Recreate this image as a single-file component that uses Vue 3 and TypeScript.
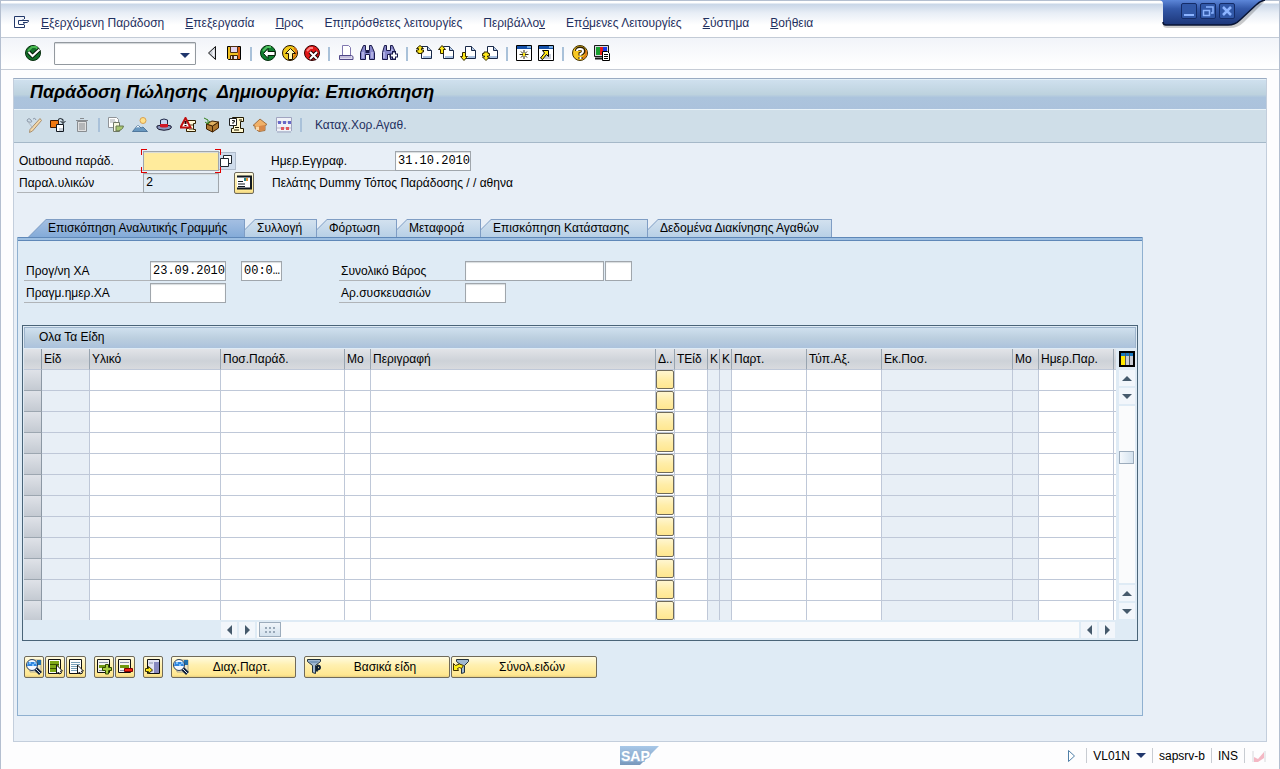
<script setup lang="ts">
import { h, ref } from 'vue'

type Shape = [d: string, fill: string, stroke?: string, width?: number]

const disc = 'M8 .5a7.500 7.500 0 1 0 0 15a7.500 7.500 0 1 0 0-15z'
const page = 'M5.500 1.500h6l4 4v8h-10z'
const fold = 'M11.500 1.500v4h4'
const up = 'M4 .5l3.500 4h-2v4h-3v-4h-2z'
const down = 'M4 15.500l3.500-4h-2v-4h-3v4h-2z'

const icons: Record<string, Shape[]> = {
  session: [
    ['M10.500 4V1.500H.5v11h10V10', 'none', '#22386a'],
    ['M4.500 9.500v-4H8l1.500-1M8 5.500h6.500v1L13 7.500H9M5 9.500h5v-2', 'none', '#22386a'],
  ],
  enter: [[disc, '#14702a', '#052d0c'], ['M3 6l4-4h4l2 3', 'none', '#48b850', 2], ['M3.500 7l4 4L14.500 4.500', 'none', '#061a08', 4], ['M3.500 7l4 4L14.500 4.500', 'none', '#fff', 2]],
  left: [['M11.500 1.500v13L4.500 8z', '#c8ccd4', '#111'], ['M9.500 5v6', 'none', '#f4f4f8', 2]],
  save: [
    ['M1.500 1.500h13v13h-12l-1-1z', '#f0c020', '#000'],
    ['M12 2h2v12H5v-2h7z', '#e06010'],
    ['M4.500 1.500h7v6h-7z', '#e4d4f0', '#503010'],
    ['M4.500 10.500h7v4h-7z', '#e8e0e8', '#402000'],
    ['M6 11h2v3H6z', '#503020'],
  ],
  back: [[disc, '#108030', '#032c0c'], ['M3 6l4-4h4', 'none', '#50c060', 2], ['M3.500 8.500l4.500-5v3h7v4H8v3z', '#fff', '#062008']],
  exit: [[disc, '#f0c818', '#201000'], ['M11 13l3-4V5l-2-2', 'none', '#e07810', 2], ['M8.500 3.500l5 5h-3v6h-4v-6h-3z', '#fff8b8', '#201000']],
  cancel: [[disc, '#e01818', '#300000'], ['M3 6l3-3h3', 'none', '#ff8080', 2], ['M6 7l7 7M13 7l-7 7', 'none', '#200000', 4], ['M6 7l7 7M13 7l-7 7', 'none', '#fff', 2]],
  print: [
    ['M4.500 .5h6l2 2v9h-8z', '#fff', '#8078b0'],
    ['M1.500 10.500h12l1.500 1v3h-13.500z', '#e0dcf0', '#504888'],
    ['M2 12h11', 'none', '#a8a0c8'],
  ],
  find: [
    ['M3.500 .5h2v5h4v-5h2l3 7v7h-5v-5h-4v5h-5v-7z', '#8888cc', '#181848'],
    ['M3 7v6M12 7v6', 'none', '#d8d8f8'],
    ['M5.500 7h4', 'none', '#181848', 2],
  ],
  findNext: [
    ['M2.500 .5h2v5h4v-5h2l3 7v7h-5v-5h-3v5h-5v-7z', '#8888cc', '#181848'],
    ['M2 7v6M10 4v3', 'none', '#d8d8f8'],
    ['M12 6v9M7.500 10.500h9', 'none', '#181848', 4],
    ['M12 7.500v6M9 10.500h6', 'none', '#fff', 2],
  ],
  first: [[page, '#fff', '#182848'], [fold, '#b8cce8', '#182848'], ['M4 .5l3.500 3h-2v1.500h2v2h-1.500v1.500h-4V7H.5V5h2V3.500h-2z', '#ffe818', '#302800'], ['M7 12h8', 'none', '#a8c0e0', 2]],
  prev: [[page, '#fff', '#182848'], [fold, '#b8cce8', '#182848'], [up, '#ffe818', '#302800'], ['M7 12h8', 'none', '#a8c0e0', 2]],
  next: [[page, '#fff', '#182848'], [fold, '#b8cce8', '#182848'], ['M8 12h7', 'none', '#a8c0e0', 2], [down, '#ffe818', '#302800']],
  last: [[page, '#fff', '#182848'], [fold, '#b8cce8', '#182848'], ['M8 12h7', 'none', '#a8c0e0', 2], ['M4 15.500L.5 12h2v-1h-2V8.500h1.500V7h4v1.500h1.500V11h-2v1h2z', '#ffe818', '#302800']],
  newSession: [
    ['M.5.5h15v15H.5z', '#fff', '#000'], ['M1 1h14v3H1z', '#1450a8'], ['M11 1h4v2h-4z', '#78b0e8'],
    ['M8 5v9M3.500 9.500h9M5 6.500l6 6M11 6.500l-6 6', 'none', '#302800'], ['M7 8h2v3H7z', '#ffe818'],
  ],
  shortcut: [
    ['M.5.5h15v15H.5z', '#fff', '#000'], ['M1 1h14v3H1z', '#1450a8'], ['M11 1h4v2h-4z', '#78b0e8'],
    ['M8 9h5v5H6z', '#c8ccd8'],
    ['M4.500 5.500h6v6l-2-2l-4 5l-2-1.500l4-5z', '#ffe818', '#000'],
  ],
  help: [[disc, '#f8c820', '#403000'], ['M10 14l4-4V5', 'none', '#e08018', 2], ['M5 6q0-2.500 3-2.500q3.500 0 3.500 2.500q0 2-3 3v1.500M8.500 12v2', 'none', '#302000', 4], ['M5 6q0-2 3-2q3 0 3 2q0 2-2.500 3v1.500M8.500 12v2', 'none', '#fff', 2]],
  layout: [
    ['M.5.5h14v11H.5z', '#d8d8e0', '#181818'], ['M2 2h4v8H2z', '#18a030'], ['M6 2h3v8H6z', '#e81818'], ['M9 2h4v8H9z', '#1838e8'],
    ['M1 13.500h9', 'none', '#181818', 2], ['M8.500 6.500h5l2 2v7h-7z', '#fff', '#000'], ['M10 9.500h4M10 11.500h4M10 13.500h4', 'none', '#000'],
  ],
  change: [
    ['M1 3q2-3 4 0t-2 2q-2 0-2-2M7 2q2-2 3 1', 'none', '#8c98a8'],
    ['M14 1.500l1.500 2L6.500 14l-3 1.500l.5-3z', '#f4d8a8', '#a89070'],
    ['M2 5l5 6', 'none', '#b0b8c0'],
  ],
  other: [
    ['M.5 3.500h8v7h-8z', '#f07810', '#401800'], ['M6.500 7.500h7v7h-7z', '#fff', '#101820'], ['M9 11h4v3H9z', '#c8d0d8'],
    ['M8 2.500q2-2 5 0v4M10.500 4l2.500 2.500L15.500 4', 'none', '#101820'],
  ],
  trash: [
    ['M3.500 4.500h9v10h-9z', '#e0e0e0', '#888c90'], ['M2 3.500h12M6 1.500h4', 'none', '#888c90'], ['M6 6v7M8 6v7M10 6v7', 'none', '#888c90'],
  ],
  copyDoc: [
    ['M.5.5h8l2 2v8H.5z', '#fff', '#909498'], ['M2 3h5M2 5h6', 'none', '#a8acb0'],
    ['M5.500 5.500h6v9h-6z', '#f8f8e0', '#707868'], ['M8 9h7.500q-1 5-7.500 5z', '#a8c870', '#687850'],
  ],
  header: [
    ['M11 .5a3 3 0 1 0 0 6a3 3 0 1 0 0-6z', '#ffe088', '#d8a050'],
    ['M.5 14.500L6 8l3 3l2-1l4.500 4.500z', '#6898c0', '#50789c'], ['M6 8l-2 3l2-1l2 1z', '#fff'],
  ],
  hat: [
    ['M1 9q7-3 14 0q1.500 2-2 3.500q-5 1.500-10 0Q0 11 1 9z', '#8c98c0', '#181830'],
    ['M4.500 9V3q3.500-2 7 0v6z', '#c8d4f0', '#202848'], ['M4 7h8v3q-4 1-8 0z', '#d01828'],
  ],
  incomplete: [
    ['M7.500 3.500h8v3h-2v6h2v2h-9v-3h2z', '#fff8d8', '#302000'], ['M10 8h3M9 12h4', 'none', '#504020'],
    ['M5.500 1l5 9.500h-10z', '#fff', '#c01010', 2], ['M5.500 4v3M5.500 8v1', 'none', '#300000', 2],
  ],
  pack: [
    ['M2.500 7l6 2 6-4v6l-6 4-6-3z', '#b07830', '#402000'], ['M2.500 7L8 4l6.500 1l-6 4z', '#e0b060', '#402000'],
    ['M8.500 9v6', 'none', '#402000'], ['M0 1l4 2v3M1 5l3 2l2-3', 'none', '#308018', 1],
  ],
  scroll: [
    ['M4.500.5h11v4h-3v7h3v4h-12v-4h2v-4h-1z', '#fff8d0', '#201800'],
    ['M1.500 1.500h7v7h-7z', '#fff', '#202020'], ['M4 3.500h2.500v1.500H5v2', 'none', '#202020'], ['M7 10.500h4M6 13h5M11 3h3', 'none', '#201800'],
  ],
  post: [
    ['M1 8.500l7-6.500 7 5.500-2 1v5l-6 1-4-3V9z', '#f0b068', '#a07040'],
    ['M7 14V9l6-1v5z', '#d88848'], ['M4 10h3v3H4z', '#f8d8a8'],
  ],
  abacus: [
    ['M.5 14V.5h15V14', '#f0f2f8', '#a0a4c0'], ['M1 5h14M1 11h14', 'none', '#b8b8c8'],
    ['M2 4h3v3H2zM7 4h3v3H7zM12 4h3v3h-3z', '#6868c8'], ['M5 10h3v3H5zM10 10h3v3h-3z', '#e05860'], ['M1 15h14', 'none', '#a0a4c0'],
  ],
  lens: [
    ['M4 1h11v12H4z', '#efe6c8', '#b0a888'],
    ['M11 1h4v5h-4z', '#1f6fae'],
    ['M9.500 9.500l5 5', 'none', '#10203a', 4],
    ['M10 10l4.500 4.500', 'none', '#dfe8f0', 1],
    ['M6 .5a5.500 5.500 0 1 0 0 11a5.500 5.500 0 1 0 0-11z', '#f4f8ff', '#283c58'],
    ['M2 3h8l1 4H1z', '#2f86e0'],
    ['M3 3h2v2H3zM6 5h2v2H6zM8 3h2v2H8z', '#7cc0f8'],
  ],
  selectAll: [
    ['M1.500 .5h12v14h-12z', '#fff', '#101010'], ['M3 2h9v3H3zM3 6h9v3H3zM3 10h9v3H3z', '#7fa818'],
    ['M3 5.500h9M3 9.500h9', 'none', '#385000'], ['M9.500 6v9l2-2l1 2l2-1l-1-2h2z', '#fff', '#181818'],
  ],
  deselectAll: [
    ['M1.500 .5h12v14h-12z', '#fff', '#101010'], ['M3 3.500h9M3 5.500h9M3 7.500h8M3 9.500h6M3 11.500h6', 'none', '#78a0b8'],
    ['M9.500 6v9l2-2l1 2l2-1l-1-2h2z', '#fff', '#181818'],
  ],
  addRow: [
    ['M1.500 .5h12v13h-12z', '#f4f4f0', '#101010'], ['M3 3.500h9M3 11.500h6', 'none', '#8890a8'], ['M3 6h7v3H3z', '#6f9810'],
    ['M9.500 5.500h3v3h3v3h-3v3.500h-3v-3.500h-3v-3h3z', '#a8cc40', '#304800'],
  ],
  removeRow: [
    ['M1.500 .5h12v13h-12z', '#f4f4f0', '#101010'], ['M3 3.500h9M3 11.500h5', 'none', '#8890a8'], ['M3 6h9v3H3z', '#6f9810'],
    ['M7.500 9.500h8v3h-8z', '#f02010', '#800000'],
  ],
  batch: [
    ['M2.500 .5h12v14h-12z', '#e4e4f4', '#101010'], ['M9 3h5v11H9z', '#8888c0'], ['M4 4h4M4 12h4', 'none', '#8890a8'],
    ['M.5 9.500h3v-2l4 3.500-4 3.500v-2h-3z', '#ffe818', '#403800'],
  ],
  filter: [
    ['M1.500 .5h13v2l-5 4v8l-3-1V6.500l-5-4z', '#a0b8d0', '#20303c'], ['M3 2h10l-2 2H5z', '#7898b8'],
    ['M11 6.500v6M11 6.500q3 0 3 2t-3 2', 'none', '#102030', 2],
  ],
  filterOff: [
    ['M3.500 .5h12v2l-4 4v7l-3 1V6.500l-5-4z', '#a0b8d0', '#20303c'],
    ['M.5 4.500l2 2q4-3 8 0l-2 3q-2-2-4 0l1 2h-5z', '#fff018', '#403000'],
  ],
  partner: [
    ['M1 1.500h14v12H1', '#fff', '#101820', 2], ['M2 6.500h5M2 9h7M2 11.500h7', 'none', '#101820'],
    ['M9 3h3v3H9z', '#e09030'], ['M8 3h2v3H8z', '#208888'],
  ],
  config: [
    ['M1 1h14v14H1z', '#fff', '#000', 2], ['M2 2h12v3H2z', '#1878c0'], ['M2 5h4v9H2z', '#ffe800'], ['M7 5h3v9H7zM11 5h3v9h-3z', '#c8ccd4'], ['M6.500 2v12M10.500 2v12', 'none', '#505860'],
  ],
  matchcode: [['M4.500 2.500h8v8h-8z', '#fff', '#202830'], ['M1.500 5.500h8v8h-8z', '#fff', '#202830']],
  play: [['M4.500 2.500l6 5.500-6 5.500z', '#fff', '#5080a8']],
  signal: [['M2 3v11M14 3v11', 'none', '#d8d8dc'], ['M3 14V9l4 2 6-7v6l-6 4z', '#f4b8c4']],
}

const Icon = (props: { name: string }) =>
  h('svg', { width: 16, height: 16, viewBox: '0 0 16 16', 'aria-hidden': 'true' },
    icons[props.name].map(([d, fill, stroke, width]) =>
      h('path', { d, fill, stroke: stroke ?? 'none', 'stroke-width': width ?? 1 })))
Icon.props = ['name']

const menus: [string, string, string][] = [
  ['', 'Ε', 'ξερχόμενη Παράδοση'],
  ['', 'Ε', 'πεξεργασία'],
  ['', 'Π', 'ρος'],
  ['Επ', 'ι', 'πρόσθετες λειτουργίες'],
  ['Περιβάλλο', 'ν', ''],
  ['Επ', 'ό', 'μενες Λειτουργίες'],
  ['', 'Σ', 'ύστημα'],
  ['', 'Β', 'οήθεια'],
]

const toolGroups = [
  ['left', 'save'],
  ['back', 'exit', 'cancel'],
  ['print', 'find', 'findNext'],
  ['first', 'prev', 'next', 'last'],
  ['newSession', 'shortcut'],
  ['help', 'layout'],
]
const appGroups = [
  ['change', 'other', 'trash'],
  ['copyDoc', 'header', 'hat', 'incomplete', 'pack', 'scroll', 'post', 'abacus'],
]

const tabs = [
  'Επισκόπηση Αναλυτικής Γραμμής',
  'Συλλογή',
  'Φόρτωση',
  'Μεταφορά',
  'Επισκόπηση Κατάστασης',
  'Δεδομένα Διακίνησης Αγαθών',
]
const active = ref(0)

const columns = [
  { label: 'Είδ', cls: 'w48', locked: true },
  { label: 'Υλικό', cls: 'w131' },
  { label: 'Ποσ.Παράδ.', cls: 'w124' },
  { label: 'Μο', cls: 'w26' },
  { label: 'Περιγραφή', cls: 'auto' },
  { label: 'Δ..', cls: 'w19', button: true },
  { label: 'ΤΕίδ', cls: 'w33' },
  { label: 'Κ', cls: 'w12', locked: true },
  { label: 'Κ', cls: 'w12', locked: true },
  { label: 'Παρτ.', cls: 'w75' },
  { label: 'Τύπ.Αξ.', cls: 'w75' },
  { label: 'Εκ.Ποσ.', cls: 'w131', locked: true },
  { label: 'Μο', cls: 'w26', locked: true },
  { label: 'Ημερ.Παρ.', cls: 'w75' },
  { label: '', cls: 'w2' },
]

const command = ref('')
const delivery = ref('')
const docDate = ref('31.10.2010')
const plannedDate = ref('23.09.2010')
const plannedTime = ref('00:00:00')
</script>

<template>
  <div class="window">
    <div class="controls">
      <svg class="controls-shape" width="106" height="30" viewBox="0 0 106 30" aria-hidden="true">
        <defs>
          <linearGradient id="blue" x1="0" y1="0" x2="0" y2="1">
            <stop offset="0" stop-color="#5c86d8" />
            <stop offset="0.35" stop-color="#3358a8" />
            <stop offset="1" stop-color="#1c3678" />
          </linearGradient>
        </defs>
        <path d="M3 3V26q1 2 4 2H70q8 0 14-6L104 2z" fill="#000" opacity="0.2" />
        <path d="M0 0q3 1 3 4V23q0 2 2 2H68q7 0 12-5L96 5q4-4 9-5z" fill="url(#blue)" />
        <path d="M3 22q0 3 3 3H68q7 0 12-5L96 5q4-4 9-5" fill="none" stroke="#081434" stroke-width="1.5" />
      </svg>
      <div class="controls-buttons">
        <button type="button" aria-label="Ελαχιστοποίηση">
          <svg width="14" height="14" viewBox="0 0 14 14"><path d="M2 11h10" stroke="#8cb4ff" stroke-width="2" /></svg>
        </button>
        <button type="button" aria-label="Επαναφορά">
          <svg width="14" height="14" viewBox="0 0 14 14"><path d="M2.500 6.500h6v5h-6zM5 3h7v6h-2" fill="none" stroke="#8cb4ff" stroke-width="1.500" /></svg>
        </button>
        <button type="button" aria-label="Κλείσιμο">
          <svg width="14" height="14" viewBox="0 0 14 14"><path d="M3 3l8 8M11 3l-8 8" stroke="#8cb4ff" stroke-width="2.500" /></svg>
        </button>
      </div>
    </div>

    <nav class="menubar">
      <button type="button" class="icon-button" aria-label="Μενού"><Icon name="session" /></button>
      <a v-for="(m, i) in menus" :key="i" href="#">{{ m[0] }}<u>{{ m[1] }}</u>{{ m[2] }}</a>
    </nav>

    <div class="toolbar">
      <button type="button" class="icon-button" aria-label="enter"><Icon name="enter" /></button>
      <div class="command">
        <input v-model="command" type="text" aria-label="Εντολή" />
        <button type="button" aria-label="Λίστα εντολών"><i class="tri-down navy"></i></button>
      </div>
      <template v-for="(group, g) in toolGroups" :key="g">
        <span v-if="g" class="sep"></span>
        <button v-for="name in group" :key="name" type="button" class="icon-button" :aria-label="name"><Icon :name="name" /></button>
      </template>
    </div>

    <main class="screen">
      <h1>Παράδοση Πώλησης&nbsp; Δημιουργία: Επισκόπηση</h1>
      <div class="app-toolbar">
        <template v-for="(group, g) in appGroups" :key="g">
          <button v-for="name in group" :key="name" type="button" class="icon-button" :aria-label="name"><Icon :name="name" /></button>
          <span class="sep"></span>
        </template>
        <button type="button" class="text-button">Καταχ.Χορ.Αγαθ.</button>
      </div>

      <div class="body">
        <div class="head-form">
          <div class="row">
            <label for="delivery">Outbound παράδ.</label>
            <span class="focus-frame"><input id="delivery" v-model="delivery" class="field date" type="text" /></span>
            <button type="button" class="match" aria-label="Αναζήτηση"><Icon name="matchcode" /></button>
            <label for="docdate" class="second">Ημερ.Εγγραφ.</label>
            <input id="docdate" v-model="docDate" class="field date" type="text" />
          </div>
          <div class="row">
            <label for="shipto">Παραλ.υλικών</label>
            <input id="shipto" class="field date locked" type="text" value="2" readonly />
            <button type="button" class="push partner" aria-label="Στοιχεία παραλήπτη"><Icon name="partner" /></button>
            <span class="customer">Πελάτης Dummy Τόπος Παράδοσης / / αθηνα</span>
          </div>
        </div>

        <div class="tabs" role="tablist">
          <button v-for="(t, i) in tabs" :key="t" type="button" role="tab" class="tab" :class="{ active: i === active }" :aria-selected="i === active" @click="active = i">
            <span>{{ t }}</span>
          </button>
        </div>

        <section class="panel">
          <div class="item-form">
            <div class="row">
              <label for="pgi">Προγ/νη ΧΑ</label>
              <input id="pgi" v-model="plannedDate" class="field date" type="text" />
              <input v-model="plannedTime" class="field short time" type="text" aria-label="Ώρα" />
              <label for="weight" class="third">Συνολικό Βάρος</label>
              <input id="weight" class="field long" type="text" />
              <input class="field unit" type="text" aria-label="Μονάδα" />
            </div>
            <div class="row">
              <label for="agi">Πραγμ.ημερ.ΧΑ</label>
              <input id="agi" class="field date" type="text" />
              <label for="packs" class="fourth">Αρ.συσκευασιών</label>
              <input id="packs" class="field short" type="text" />
            </div>
          </div>

          <div class="grid">
            <h2>Ολα Τα Είδη</h2>
            <div class="grid-body">
              <div class="table-wrap">
                <table>
                  <colgroup>
                    <col class="w18" />
                    <col v-for="(c, i) in columns" :key="i" :class="c.cls" />
                  </colgroup>
                  <thead>
                    <tr>
                      <th class="selector"></th>
                      <th v-for="(c, i) in columns" :key="i" scope="col">{{ c.label }}</th>
                    </tr>
                  </thead>
                  <tbody>
                    <tr v-for="r in 12" :key="r">
                      <td class="selector"></td>
                      <td v-for="(c, i) in columns" :key="i" :class="{ readonly: c.locked }">
                        <button v-if="c.button" type="button" class="cell-button" aria-label="Διαχωρισμός παρτίδας"></button>
                      </td>
                    </tr>
                  </tbody>
                </table>
              </div>
              <div class="vscroll">
                <button type="button" class="config" aria-label="Ρυθμίσεις πίνακα"><Icon name="config" /></button>
                <button type="button" class="arrow" aria-label="Αρχή"><i class="tri-up"></i></button>
                <button type="button" class="arrow" aria-label="Πάνω"><i class="tri-down"></i></button>
                <div class="vtrack"><div class="vthumb"></div></div>
                <button type="button" class="arrow" aria-label="Κάτω"><i class="tri-up"></i></button>
                <button type="button" class="arrow" aria-label="Τέλος"><i class="tri-down"></i></button>
              </div>
            </div>
            <div class="hscroll">
              <button type="button" class="arrow" aria-label="Αριστερά"><i class="tri-left"></i></button>
              <button type="button" class="arrow" aria-label="Δεξιά"><i class="tri-right"></i></button>
              <div class="htrack">
                <div class="hthumb">
                  <svg width="10" height="6" viewBox="0 0 10 6"><path d="M0 1h2M4 1h2M8 1h2M0 5h2M4 5h2M8 5h2" stroke="#98a8b8" stroke-width="2" /></svg>
                </div>
              </div>
              <button type="button" class="arrow" aria-label="Προηγούμενη στήλη"><i class="tri-left"></i></button>
              <button type="button" class="arrow" aria-label="Επόμενη στήλη"><i class="tri-right"></i></button>
            </div>
          </div>

          <div class="actions">
            <div class="group">
              <button type="button" class="push" aria-label="Λεπτομέρειες"><Icon name="lens" /></button>
              <button type="button" class="push" aria-label="Επιλογή όλων"><Icon name="selectAll" /></button>
              <button type="button" class="push" aria-label="Αποεπιλογή όλων"><Icon name="deselectAll" /></button>
            </div>
            <div class="group">
              <button type="button" class="push" aria-label="Προσθήκη"><Icon name="addRow" /></button>
              <button type="button" class="push" aria-label="Διαγραφή"><Icon name="removeRow" /></button>
            </div>
            <div class="group">
              <button type="button" class="push" aria-label="Μεταφορά γραμμής"><Icon name="batch" /></button>
            </div>
            <div class="group">
              <button type="button" class="push wide batch-split"><Icon name="lens" /><span>Διαχ.Παρτ.</span></button>
            </div>
            <div class="group">
              <button type="button" class="push wide"><Icon name="filter" /><span>Βασικά είδη</span></button>
              <button type="button" class="push wide"><Icon name="filterOff" /><span>Σύνολ.ειδών</span></button>
            </div>
          </div>
        </section>
      </div>
    </main>

    <footer class="status">
      <span></span>
      <svg width="40" height="20" viewBox="0 0 40 20" role="img" aria-label="SAP">
        <defs>
          <linearGradient id="logo" x1="0" y1="0" x2="0" y2="1">
            <stop offset="0" stop-color="#a8c8e8" />
            <stop offset="1" stop-color="#7898bc" />
          </linearGradient>
        </defs>
        <path d="M0 0h39L20 19H0z" fill="url(#logo)" />
        <text class="logo-text" x="1" y="15">SAP</text>
      </svg>
      <div class="status-info">
        <button type="button" class="icon-button" aria-label="Εμφάνιση"><Icon name="play" /></button>
        <span class="bar"></span>
        <button type="button" class="tcode">VL01N<i class="tri-down navy"></i></button>
        <span class="bar"></span>
        <span>sapsrv-b</span>
        <span class="bar"></span>
        <span>INS</span>
        <span class="bar"></span>
        <Icon name="signal" />
      </div>
    </footer>
  </div>
</template>

<style>
body {
  margin: 0;
}
</style>

<style scoped>
.window {
  position: relative;
  display: flex;
  flex-direction: column;
  min-height: 100vh;
  box-sizing: border-box;
  border: 1px solid #b4bfd0;
  border-bottom-color: #d8dadd;
  background: #fdfdfe;
  color: #000;
  font: 12px/16px "Liberation Sans", Arial, sans-serif;
}
button,
input {
  margin: 0;
  padding: 0;
  border: 0;
  background: none;
  color: inherit;
  font: inherit;
  box-sizing: border-box;
}
button {
  flex: none;
}
svg {
  display: block;
  flex: none;
}
.icon-button {
  width: 16px;
  height: 16px;
}

.controls {
  position: absolute;
  top: -1px;
  right: 13px;
  width: 106px;
  height: 30px;
}
.controls-buttons {
  position: absolute;
  top: 3px;
  left: 21px;
  display: flex;
  gap: 3px;
}
.controls-buttons button {
  width: 16px;
  height: 16px;
  border: 1px solid #142c68;
  border-radius: 2px;
  background: #3158a8;
}

.menubar {
  display: flex;
  align-items: center;
  gap: 21px;
  height: 37px;
  padding-left: 13px;
  padding-top: 7px;
  box-sizing: border-box;
  border-bottom: 1px solid #c3cbd6;
  background: linear-gradient(#fff 2px, #c9d6e7 3px, #e8eef6 12px, #fff 24px);
}
.menubar .icon-button {
  margin-right: -10px;
}
.menubar a {
  color: #1f3060;
  text-decoration: none;
  white-space: nowrap;
}

.toolbar {
  display: flex;
  align-items: center;
  gap: 6px;
  height: 31px;
  padding-left: 24px;
  border-bottom: 1px solid #c6ccd6;
  background: linear-gradient(#f1f4f9, #fff 90%);
}
.toolbar .icon-button {
  margin-bottom: 2px;
}
.command {
  display: flex;
  align-items: center;
  width: 142px;
  height: 23px;
  margin: 0 2px 0 7px;
  box-sizing: border-box;
  border: 1px solid #93999f;
  border-radius: 1px;
  background: #fff;
  box-shadow: inset 0 1px 1px #d0d4d8;
}
.command input {
  flex: 1;
  min-width: 0;
  height: 20px;
  padding-left: 3px;
}
.command button {
  width: 20px;
  height: 20px;
}
.sep {
  flex: none;
  width: 2px;
  height: 14px;
  margin: 0 2px;
  background: #a9c1d9;
}

.tri-up,
.tri-down,
.tri-left,
.tri-right {
  display: inline-block;
  width: 0;
  height: 0;
  border: 5px solid transparent;
}
.tri-up {
  border-top: 0;
  border-bottom-color: #465a6c;
}
.tri-down {
  border-bottom: 0;
  border-top-color: #465a6c;
}
.tri-left {
  border-left: 0;
  border-right-color: #465a6c;
}
.tri-right {
  border-right: 0;
  border-left-color: #465a6c;
}
.tri-down.navy {
  border-top-color: #20366c;
}

.screen {
  flex: 1;
  display: flex;
  flex-direction: column;
  margin: 8px 12px 0;
  border: 1px solid #c3cedc;
  border-top-color: #9aabc2;
  background: #e8eff7;
}
h1 {
  margin: 0;
  padding: 0 16px;
  height: 30px;
  box-sizing: border-box;
  border-top: 1px solid #e4f0f8;
  background: linear-gradient(#cfe0ee, #bdd2de 50%, #acc4dd 60%, #abc2dc);
  font: italic bold 18px/24px "Liberation Sans", Arial, sans-serif;
  white-space: nowrap;
}
.app-toolbar {
  display: flex;
  align-items: center;
  gap: 8px;
  height: 34px;
  padding: 0 0 3px 12px;
  box-sizing: border-box;
  border-top: 1px solid #e8f2f8;
  border-bottom: 1px solid #a5b8c8;
  background: #cfdee8;
}
.app-toolbar .sep {
  margin: 0;
}
.text-button {
  padding: 0 5px;
  color: #1f3060;
}

.body {
  flex: 1;
  padding: 8px 3px 25px;
}
.row {
  display: flex;
  align-items: center;
  height: 20px;
}
.row + .row {
  margin-top: 2px;
}
label {
  flex: none;
  width: 126px;
  height: 20px;
  padding-left: 2px;
  box-sizing: border-box;
  border-bottom: 1px solid #b0b4b8;
  line-height: 20px;
  white-space: nowrap;
}
.field {
  flex: none;
  height: 20px;
  padding: 0 0 0 2px;
  border: 1px solid #a0a6ac;
  background: #fff;
  box-shadow: inset 0 1px 1px #d8dcde;
  font: 12px/16px "Liberation Mono", "Courier New", monospace;
}
.date {
  width: 76px;
}
.short {
  width: 41px;
}
.long {
  width: 139px;
}
.unit {
  width: 27px;
  margin-left: 1px;
}
.time {
  margin-left: 15px;
  text-overflow: ellipsis;
}
.locked {
  background: #dfebf5;
}
.focus-frame {
  position: relative;
  display: flex;
}
.focus-frame .field {
  background: #ffeb9c;
}
.focus-frame::after {
  content: "";
  position: absolute;
  inset: -2px;
  pointer-events: none;
  background:
    linear-gradient(#e00000, #e00000) 0 0 / 6px 1px,
    linear-gradient(#e00000, #e00000) 0 0 / 1px 6px,
    linear-gradient(#e00000, #e00000) 100% 0 / 6px 1px,
    linear-gradient(#e00000, #e00000) 100% 0 / 1px 6px,
    linear-gradient(#e00000, #e00000) 0 100% / 6px 1px,
    linear-gradient(#e00000, #e00000) 0 100% / 1px 6px,
    linear-gradient(#e00000, #e00000) 100% 100% / 6px 1px,
    linear-gradient(#e00000, #e00000) 100% 100% / 1px 6px;
  background-repeat: no-repeat;
}
.match {
  width: 17px;
  height: 18px;
  border: 1px solid #b0bccc;
  border-left: 0;
  background: #cfdcec;
}
.second {
  margin-left: 33px;
}
.third {
  margin-left: 57px;
}
.fourth {
  margin-left: 113px;
}
.customer {
  margin-left: 18px;
  white-space: nowrap;
}

.push {
  display: flex;
  align-items: center;
  width: 20px;
  height: 22px;
  padding: 0 1px;
  border: 1px solid #6f6a5a;
  border-radius: 2px;
  background: linear-gradient(#fffbe0, #fff0b0 40%, #ffe790 90%, #e8cf80);
}
.partner {
  margin-left: 15px;
}
.push.wide {
  width: 146px;
}
.push.wide span {
  flex: 1;
  text-align: center;
}
.push.batch-split {
  width: 125px;
}

.tabs {
  display: grid;
  grid-template-columns: 217px 72px 80px 84px 167px 184px;
  margin: 26px 0 0 11px;
  height: 18px;
}
.tab {
  position: relative;
  height: 18px;
  margin-left: -8px;
  padding-left: 20px;
  text-align: left;
  white-space: nowrap;
  background: #7f9dc4;
  clip-path: polygon(18px 0, 100% 0, 100% 100%, 0 100%);
}
.tab::before {
  content: "";
  position: absolute;
  inset: 1px 1px 0 0;
  background: linear-gradient(#d2e1ef, #b8d0e6);
  clip-path: polygon(18px 0, 100% 0, 100% 100%, 1px 100%);
}
.tab span {
  position: relative;
}
.tab.active::before {
  background: linear-gradient(#a4bfe2, #84abd8);
}
.tab:first-child {
  margin-left: 0;
  z-index: 6;
}
.tab:nth-child(2) {
  z-index: 5;
}
.tab:nth-child(3) {
  z-index: 4;
}
.tab:nth-child(4) {
  z-index: 3;
}
.tab:nth-child(5) {
  z-index: 2;
}

.panel {
  max-width: 1126px;
  padding: 20px 4px 37px;
  box-sizing: border-box;
  border: 1px solid #8fb0d0;
  border-top: 0;
  background: linear-gradient(#5f88b8 1px, #9dbfe2 1px 3px, #5f88b8 3px 4px, #dfebf5 4px);
  padding-top: 24px;
}
.item-form {
  padding-left: 2px;
}

.grid {
  margin-top: 22px;
  border: 1px solid #4a6478;
}
h2 {
  margin: 1px;
  height: 21px;
  padding-left: 14px;
  box-sizing: border-box;
  border: 1px solid #9db4cc;
  border-bottom: 0;
  background: linear-gradient(#cfe0ee, #bccfdf 50%, #abc2dc);
  font: 12px/18px "Liberation Sans", Arial, sans-serif;
}
.grid-body {
  display: flex;
  margin: 0 1px;
}
.table-wrap {
  flex: 1;
  min-width: 0;
  overflow: hidden;
}
table {
  width: 100%;
  table-layout: fixed;
  border-collapse: separate;
  border-spacing: 0;
}
th,
td {
  height: 21px;
  padding: 0;
  box-sizing: border-box;
  border-right: 1px solid #bfc8d8;
  border-bottom: 1px solid #bfc8d8;
  overflow: hidden;
  white-space: nowrap;
  vertical-align: top;
}
th {
  padding-left: 2px;
  border-right-color: #98a4b0;
  background: linear-gradient(#e2e4e8, #cdd2d8 60%, #d8dade);
  font-weight: normal;
  line-height: 20px;
  text-align: left;
}
td {
  background: #fff;
}
td.readonly {
  background: #e8eff6;
}
.selector {
  border-right: 1px solid #8c98a4;
}
td.selector {
  border-bottom-color: #9ca6b0;
  background: linear-gradient(#dfe2e8, #c4cad2);
}
tbody tr:last-child td {
  height: 19px;
  border-bottom: 0;
}
th:last-child,
td:last-child {
  border-right: 0;
}
.w2 { width: 2px; }
.w12 { width: 12px; }
.w18 { width: 18px; }
.w19 { width: 19px; }
.w26 { width: 26px; }
.w33 { width: 33px; }
.w48 { width: 48px; }
.w75 { width: 75px; }
.w124 { width: 124px; }
.w131 { width: 131px; }
.cell-button {
  display: block;
  width: 18px;
  height: 19px;
  border: 1px solid #6f6a5a;
  border-radius: 2px;
  background: linear-gradient(#fff6d0, #ffeda8 50%, #ffe790);
}

.vscroll {
  display: flex;
  flex-direction: column;
  align-items: flex-end;
  width: 20px;
}
.config {
  display: flex;
  align-items: center;
  justify-content: center;
  width: 18px;
  height: 20px;
}
.arrow {
  display: flex;
  align-items: center;
  justify-content: center;
  width: 16px;
  height: 16px;
  margin: 1px;
  background: #f2f6fb;
}
.vtrack {
  flex: 1;
  width: 16px;
  margin: 1px;
  background: #fafbfc;
}
.vthumb {
  width: 15px;
  height: 13px;
  margin-top: 45px;
  box-sizing: border-box;
  border: 1px solid #9cacbc;
  background: linear-gradient(90deg, #f4f8fc, #d4e2ee);
}
.hscroll {
  display: flex;
  align-items: center;
  height: 20px;
  margin: 0 21px 0 197px;
}
.htrack {
  flex: 1;
  display: flex;
  height: 16px;
  margin: 0 1px;
  padding-left: 2px;
  background: #fafbfc;
}
.hthumb {
  display: flex;
  align-items: center;
  justify-content: center;
  width: 22px;
  height: 15px;
  box-sizing: border-box;
  border: 1px solid #9cacbc;
  background: linear-gradient(#f0f5fa, #d4e2ee);
}

.actions {
  display: flex;
  gap: 8px;
  margin: 15px 0 0 2px;
}
.group {
  display: flex;
  gap: 1px;
}

.status {
  display: grid;
  grid-template-columns: 1fr auto 1fr;
  align-items: center;
  height: 27px;
}
.logo-text {
  font: bold 14px "Liberation Sans", Arial, sans-serif;
  fill: #fff;
  stroke: #9ab8d8;
  stroke-width: 2px;
  paint-order: stroke;
}
.status-info {
  display: flex;
  align-items: center;
  justify-content: flex-end;
  gap: 6px;
  padding-right: 12px;
}
.bar {
  width: 1px;
  height: 15px;
  background: #c8ccd2;
}
.tcode {
  display: flex;
  align-items: center;
  gap: 6px;
}
</style>
